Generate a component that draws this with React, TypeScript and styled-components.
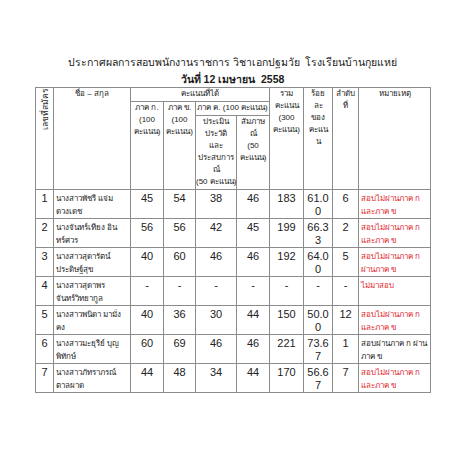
import React from "react";
import styled, { createGlobalStyle } from "styled-components";

const GlobalStyle = createGlobalStyle`
  html, body {
    margin: 0;
    padding: 0;
    background: #ffffff;
  }
  body {
    font-family: "Liberation Sans", "DejaVu Sans", sans-serif;
    color: #222;
  }
`;

interface Row {
    no: string;
    name: [string, string];
    a: string;
    b: string;
    c1: string;
    c2: string;
    total: string;
    pct: [string, string];
    rank: string;
    note: [string, string];
    failed: boolean;
}

const rows: Row[] = [
    { no: "1", name: ["นางสาวพัชรี แจ่ม", "ดวงเดช"], a: "45", b: "54", c1: "38", c2: "46", total: "183", pct: ["61.0", "0"], rank: "6", note: ["สอบไม่ผ่านภาค ก", "และภาค ข"], failed: true },
    { no: "2", name: ["นางจันทร์เทียง อิน", "ทร์ศวร"], a: "56", b: "56", c1: "42", c2: "45", total: "199", pct: ["66.3", "3"], rank: "2", note: ["สอบไม่ผ่านภาค ก", "และภาค ข"], failed: true },
    { no: "3", name: ["นางสาวสุดารัตน์", "ประดิษฐ์สุข"], a: "40", b: "60", c1: "46", c2: "46", total: "192", pct: ["64.0", "0"], rank: "5", note: ["สอบไม่ผ่านภาค ก", "ผ่านภาค ข"], failed: true },
    { no: "4", name: ["นางสาวสุดาพร", "จันทร์วิทยากูล"], a: "-", b: "-", c1: "-", c2: "-", total: "-", pct: ["-", ""], rank: "-", note: ["ไม่มาสอบ", ""], failed: true },
    { no: "5", name: ["นางสาวพนิดา มามั่ง", "คง"], a: "40", b: "36", c1: "30", c2: "44", total: "150", pct: ["50.0", "0"], rank: "12", note: ["สอบไม่ผ่านภาค ก", "และภาค ข"], failed: true },
    { no: "6", name: ["นางสาวมะยุรีย์ บุญ", "พิทักษ์"], a: "60", b: "69", c1: "46", c2: "46", total: "221", pct: ["73.6", "7"], rank: "1", note: ["สอบผ่านภาค ก ผ่าน", "ภาค ข"], failed: false },
    { no: "7", name: ["นางสาวภัทราภรณ์", "ตาลผาด"], a: "44", b: "48", c1: "34", c2: "44", total: "170", pct: ["56.6", "7"], rank: "7", note: ["สอบไม่ผ่านภาค ก", "และภาค ข"], failed: true },
];

const colWidths = [18, 77, 33, 32, 41, 33, 34, 29, 26, 72];

export default function App() {
    return (
        <Page>
            <GlobalStyle />
            <Heading>
                <TitleLine>ประกาศผลการสอบพนักงานราชการ วิชาเอกปฐมวัย&nbsp; โรงเรียนบ้านกุยแหย่</TitleLine>
                <DateLine>วันที่ 12 เมษายน&nbsp; 2558</DateLine>
            </Heading>
            <Table>
                <colgroup>
                    {colWidths.map((w, i) => (
                        <col key={i} style={{ width: w }} />
                    ))}
                </colgroup>
                <thead>
                    <HeadRow $height={14}>
                        <Th rowSpan={3}>
                            <Vertical>เลขที่สมัคร</Vertical>
                        </Th>
                        <Th rowSpan={3}>ชื่อ – สกุล</Th>
                        <Th colSpan={4}>คะแนนที่ได้</Th>
                        <Th rowSpan={3}>
                            รวม<br />คะแนน<br />(300<br />คะแนน)
                        </Th>
                        <Th rowSpan={3}>
                            ร้อย<br />ละ<br />ของ<br />คะแน<br />น
                        </Th>
                        <Th rowSpan={3}>
                            ลำดับ<br />ที่
                        </Th>
                        <Th rowSpan={3}>หมายเหตุ</Th>
                    </HeadRow>
                    <HeadRow $height={14}>
                        <Th rowSpan={2}>
                            ภาค ก.<br />(100<br />คะแนน)
                        </Th>
                        <Th rowSpan={2}>
                            ภาค ข.<br />(100<br />คะแนน)
                        </Th>
                        <Th colSpan={2}>ภาค ค. (100 คะแนน)</Th>
                    </HeadRow>
                    <HeadRow $height={74}>
                        <Th>
                            ประเมิน<br />ประวัติ<br />และ<br />ประสบการ<br />ณ์<br />(50 คะแนน)
                        </Th>
                        <Th>
                            สัมภาษ<br />ณ์<br />(50<br />คะแนน)
                        </Th>
                    </HeadRow>
                </thead>
                <tbody>
                    {rows.map((r) => (
                        <BodyRow key={r.no}>
                            <NumCell>{r.no}</NumCell>
                            <TextCell>
                                {r.name[0]}
                                <br />
                                {r.name[1]}
                            </TextCell>
                            <NumCell>{r.a}</NumCell>
                            <NumCell>{r.b}</NumCell>
                            <NumCell>{r.c1}</NumCell>
                            <NumCell>{r.c2}</NumCell>
                            <NumCell>{r.total}</NumCell>
                            <NumCell>
                                {r.pct[0]}
                                {r.pct[1] && <br />}
                                {r.pct[1]}
                            </NumCell>
                            <NumCell>{r.rank}</NumCell>
                            <TextCell $tone={r.failed ? "fail" : "pass"}>
                                {r.note[0]}
                                {r.note[1] && <br />}
                                {r.note[1]}
                            </TextCell>
                        </BodyRow>
                    ))}
                </tbody>
            </Table>
        </Page>
    );
}

const Page = styled.div`
    width: 452px;
    height: 452px;
    padding-top: 54px;
    box-sizing: border-box;
    background: #ffffff;
`;

const Heading = styled.div`
    width: 395px;
    margin-left: 35px;
    display: flex;
    flex-direction: column;
    align-items: center;
    color: #1a1a1a;
`;

const TitleLine = styled.div`
    font-size: 10.5px;
    line-height: 17px;
    white-space: nowrap;
`;

const DateLine = styled.div`
    font-size: 10.5px;
    line-height: 16px;
    font-weight: bold;
`;

const Table = styled.table`
    margin-left: 35px;
    width: 395px;
    table-layout: fixed;
    border-collapse: collapse;
    border: 1px solid #8c8c8c;
`;

const HeadRow = styled.tr<{ $height: number }>`
    height: ${(p) => p.$height}px;
`;

const Th = styled.th`
    border: 1px solid #8c8c8c;
    padding: 0;
    font-weight: normal;
    font-size: 8px;
    line-height: 12px;
    text-align: center;
    vertical-align: top;
    color: #222;
    overflow: hidden;
    white-space: nowrap;
`;

const Vertical = styled.div`
    writing-mode: vertical-rl;
    transform: rotate(180deg);
    margin: 0 auto;
    font-size: 8.5px;
    line-height: 14px;
    padding-top: 2px;
`;

const BodyRow = styled.tr`
    height: 29px;
`;

const NumCell = styled.td`
    border: 1px solid #8c8c8c;
    padding: 2px 0 0;
    text-align: center;
    vertical-align: top;
    font-family: "Liberation Sans", sans-serif;
    font-size: 11px;
    line-height: 13px;
    color: #222;
    white-space: nowrap;
    overflow: hidden;
`;

const TextCell = styled.td<{ $tone?: "fail" | "pass" }>`
    border: 1px solid #8c8c8c;
    padding: 2px 1px 0 2px;
    text-align: left;
    vertical-align: top;
    font-size: 8px;
    line-height: 13px;
    color: ${(p) => (p.$tone === "fail" ? "#e0262b" : "#222")};
    white-space: nowrap;
    overflow: hidden;
`;
